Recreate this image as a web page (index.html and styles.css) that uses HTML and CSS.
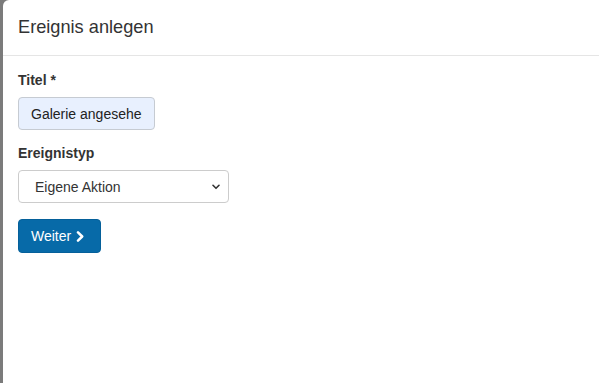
FILE: index.html
```html
<!DOCTYPE html>
<html lang="de">
<head>
<meta charset="utf-8">
<title>Ereignis anlegen</title>
<link rel="stylesheet" href="styles.css">
</head>
<body>
<div class="modal">
  <div class="modal-header">
    <h4 class="modal-title">Ereignis anlegen</h4>
  </div>
  <div class="modal-body">
    <div class="form-group">
      <label class="label" for="titel">Titel *</label>
      <input class="input" id="titel" type="text" value="Galerie angesehen">
    </div>
    <div class="form-group">
      <label class="label" for="typ">Ereignistyp</label>
      <div class="select-wrap">
        <select class="select" id="typ">
          <option>Eigene Aktion</option>
        </select>
        <svg class="select-arrow" width="8" height="6" viewBox="0 0 8 6"><path d="M1 1.3 L4 4.3 L7 1.3" fill="none" stroke="#333" stroke-width="1.6" stroke-linecap="round" stroke-linejoin="round"/></svg>
      </div>
    </div>
    <button class="btn" type="button">Weiter
      <svg class="btn-icon" width="9" height="11" viewBox="0 0 9 11"><path d="M2 1.4 L6.2 5.5 L2 9.6" fill="none" stroke="#fff" stroke-width="2.5" stroke-linecap="round" stroke-linejoin="round"/></svg>
    </button>
  </div>
</div>
</body>
</html>
```

FILE: styles.css
```css
html, body {
  margin: 0;
  padding: 0;
  height: 100%;
}
body {
  background: #7b7b7b;
  font-family: "Liberation Sans", Arial, sans-serif;
  color: #333;
  display: flex;
}
.modal {
  flex: 1;
  margin-left: 3px;
  background: #fff;
  border-top-left-radius: 6px;
}
.modal-header {
  padding: 16px 15px 17px 15px;
  border-bottom: 1px solid #e5e5e5;
}
.modal-title {
  margin: 0;
  font-size: 18.2px;
  line-height: 22px;
  font-weight: normal;
  color: #333;
}
.modal-body {
  padding: 14px 15px;
}
.form-group {
  margin-bottom: 13px;
}
.label {
  display: block;
  font-size: 14px;
  line-height: 20px;
  font-weight: bold;
  color: #333;
  margin-bottom: 7px;
}
.input {
  display: block;
  box-sizing: border-box;
  width: 137px;
  height: 33px;
  padding: 0 12px;
  margin: 0;
  border: 1px solid #c6cbd2;
  border-radius: 4px;
  background: #e8f0fe;
  font-family: "Liberation Sans", Arial, sans-serif;
  font-size: 14px;
  color: #222;
  outline: none;
}
.select-wrap {
  position: relative;
  width: 211px;
  margin-bottom: 16px;
}
.select {
  display: block;
  box-sizing: border-box;
  width: 211px;
  height: 33px;
  margin: 0;
  padding: 0 24px 0 16px;
  border: 1px solid #ccc;
  border-radius: 4px;
  background: #fff;
  font-family: "Liberation Sans", Arial, sans-serif;
  font-size: 14px;
  color: #333;
  -webkit-appearance: none;
  appearance: none;
  outline: none;
}
.select-arrow {
  position: absolute;
  right: 9px;
  top: 14px;
}
.btn {
  display: flex;
  align-items: center;
  gap: 5px;
  box-sizing: border-box;
  height: 34px;
  margin: 0;
  padding: 0 15px 0 12px;
  border: 1px solid #05609a;
  border-radius: 4px;
  background: #076aa8;
  color: #fff;
  font-family: "Liberation Sans", Arial, sans-serif;
  font-size: 14px;
  cursor: pointer;
}
.btn-icon {
  display: block;
}
```
